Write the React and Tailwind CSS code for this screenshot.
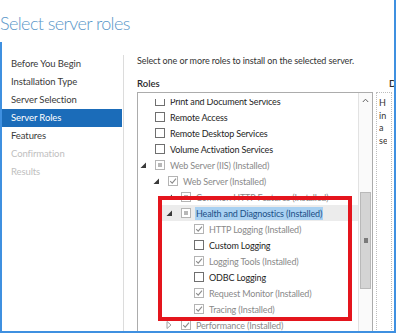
import React from "react";

const Tri = ({ open }) =>
  open ? (
    <svg width="6" height="6" viewBox="0 0 6 6" className="block">
      <polygon points="6,0.5 6,6 0.5,6" fill="#3a3a3a" />
    </svg>
  ) : (
    <svg width="6" height="8" viewBox="0 0 6 8" className="block">
      <polygon points="1,0.5 5,4 1,7.5" fill="none" stroke="#a0a0a0" strokeWidth="1" />
    </svg>
  );

const Box = ({ kind }) => {
  if (kind === "empty")
    return <div className="w-[10px] h-[10px] border border-[#6f6f6f] bg-white shrink-0" />;
  if (kind === "ind")
    return (
      <div className="w-[10px] h-[10px] border border-[#b4b4b4] bg-white shrink-0 flex items-center justify-center">
        <div className="w-[4px] h-[4px] bg-[#b8b8b8]" />
      </div>
    );
  return (
    <div className="w-[10px] h-[10px] border border-[#b4b4b4] bg-white shrink-0 flex items-center justify-center">
      <svg width="8" height="8" viewBox="0 0 8 8" className="block">
        <polyline points="1.2,4.2 3.2,6.2 7,1.6" fill="none" stroke="#8c8c8c" strokeWidth="1.1" />
      </svg>
    </div>
  );
};

const rows = [
  { l: 0, t: "Print and Document Services", b: "empty", dark: true },
  { l: 0, t: "Remote Access", b: "empty", dark: true },
  { l: 0, t: "Remote Desktop Services", b: "empty", dark: true },
  { l: 0, t: "Volume Activation Services", b: "empty", dark: true },
  { l: 0, t: "Web Server (IIS) (Installed)", b: "ind", tri: "open" },
  { l: 1, t: "Web Server (Installed)", b: "check", tri: "open" },
  { l: 2, t: "Common HTTP Features (Installed)", b: "ind", tri: "open" },
  { l: 2, t: "Health and Diagnostics (Installed)", b: "ind", tri: "open", sel: true },
  { l: 3, t: "HTTP Logging (Installed)", b: "check" },
  { l: 3, t: "Custom Logging", b: "empty", dark: true },
  { l: 3, t: "Logging Tools (Installed)", b: "check" },
  { l: 3, t: "ODBC Logging", b: "empty", dark: true },
  { l: 3, t: "Request Monitor (Installed)", b: "check" },
  { l: 3, t: "Tracing (Installed)", b: "check" },
  { l: 2, t: "Performance (Installed)", b: "check", tri: "closed" },
];

const padByLevel = ["pl-[2px]", "pl-[15px]", "pl-[28px]", "pl-[41px]"];

const Row = ({ r }) => (
  <div className={`h-[16px] flex items-center ${padByLevel[r.l]}`}>
    <div className={`flex items-center h-[16px] flex-1 ${r.sel ? "bg-[#ececec] -ml-[4px] pl-[4px]" : ""}`}>
      <div className="w-[15px] shrink-0 flex items-center justify-start">
        {r.tri === "open" && <Tri open />}
        {r.tri === "closed" && <Tri />}
      </div>
      <Box kind={r.b} />
      <div className="w-[5px] shrink-0" />
      <span
        className={`whitespace-nowrap text-[9px] leading-[13px] tracking-[-0.15px] ${
          r.sel
            ? "bg-[#a9d1f2] text-[#1c4f86] px-[1px] -ml-[1px]"
            : r.dark
            ? "text-[#1e1e1e]"
            : "text-[#8a8a8a]"
        }`}
      >
        {r.t}
      </span>
    </div>
  </div>
);

const nav = [
  { t: "Before You Begin" },
  { t: "Installation Type" },
  { t: "Server Selection" },
  { t: "Server Roles", sel: true },
  { t: "Features" },
  { t: "Confirmation", dim: true },
  { t: "Results", dim: true },
];

export default function App() {
  return (
    <div className="w-[396px] h-[333px] bg-white overflow-hidden font-['Lato',sans-serif]">
      <div className="w-[396px] h-[333px] flex flex-col border-r-2 border-b-2 border-[#3f90e0] overflow-hidden">
        <div className="h-[42px] shrink-0 pt-[11px]">
          <div className="text-[18px] leading-[24px] font-light text-[#5a97c9] tracking-[-0.6px] whitespace-nowrap">
            Select server roles
          </div>
        </div>
        <div className="flex-1 min-h-0 flex border-l-2 border-[#3f90e0]">
          <div className="w-[122px] shrink-0 mt-[13px] border-r border-[#dcdcdc] flex flex-col">
            {nav.map((n) => (
              <div
                key={n.t}
                className={`h-[18px] mr-[1px] pl-[9px] flex items-center text-[9.5px] tracking-[-0.1px] whitespace-nowrap ${
                  n.sel ? "bg-[#1b6cb9] text-white" : n.dim ? "text-[#c0c0c0]" : "text-[#3a3a3a]"
                }`}
              >
                {n.t}
              </div>
            ))}
          </div>
          <div className="flex-1 min-w-0 pl-[13px] pt-[12px] overflow-hidden">
            <div className="text-[9px] leading-[14px] text-[#333] whitespace-nowrap tracking-[-0.1px]">
              Select one or more roles to install on the selected server.
            </div>
            <div className="flex gap-[3px] mt-[9px]">
              <div className="w-[236px] shrink-0">
                <div className="h-[14px] text-[9.5px] leading-[14px] font-semibold text-[#2a2a2a]">Roles</div>
                <div className="mt-[1px] h-[260px] border border-[#acacac] flex relative">
                  <div className="flex-1 min-w-0 pt-[6px]">
                    <div className="h-full overflow-hidden">
                      <div className="-mt-[6px]">
                        {rows.map((r) => (
                          <Row key={r.t} r={r} />
                        ))}
                      </div>
                    </div>
                  </div>
                  <div className="w-[14px] shrink-0 border-l border-[#e2e2e2] bg-[#fafafa] flex flex-col items-center">
                    <div className="h-[14px] w-full flex items-center justify-center">
                      <svg width="7" height="5" viewBox="0 0 7 5" className="block">
                        <polyline points="0.8,4 3.5,1.2 6.2,4" fill="none" stroke="#606060" strokeWidth="1" />
                      </svg>
                    </div>
                    <div className="mt-[85px] w-[11px] h-[97px] bg-[#d4d4d4] border border-[#b9b9b9] flex items-center justify-center">
                      <div className="w-[4px] h-[5px] bg-[#7a7a7a]" />
                    </div>
                  </div>
                  <div className="absolute left-[20px] top-[103px] w-[194px] h-[125px] border-[4px] border-[#e4151d]" />
                </div>
              </div>
              <div className="w-[16px] shrink-0">
                <div className="h-[14px] pl-[13px] w-[18px] overflow-hidden text-[9.5px] leading-[14px] font-semibold text-[#2a2a2a]">D</div>
                <div className="mt-[1px] h-[260px] border border-dotted border-[#bdbdbd] pl-[2px] pt-[4px] text-[9px] leading-[12.5px] text-[#333] whitespace-nowrap">
                  <div className="w-[8px] overflow-hidden">
                    <div>H</div>
                    <div>in</div>
                    <div>a</div>
                    <div>se</div>
                  </div>
                </div>
              </div>
            </div>
          </div>
        </div>
      </div>
    </div>
  );
}
